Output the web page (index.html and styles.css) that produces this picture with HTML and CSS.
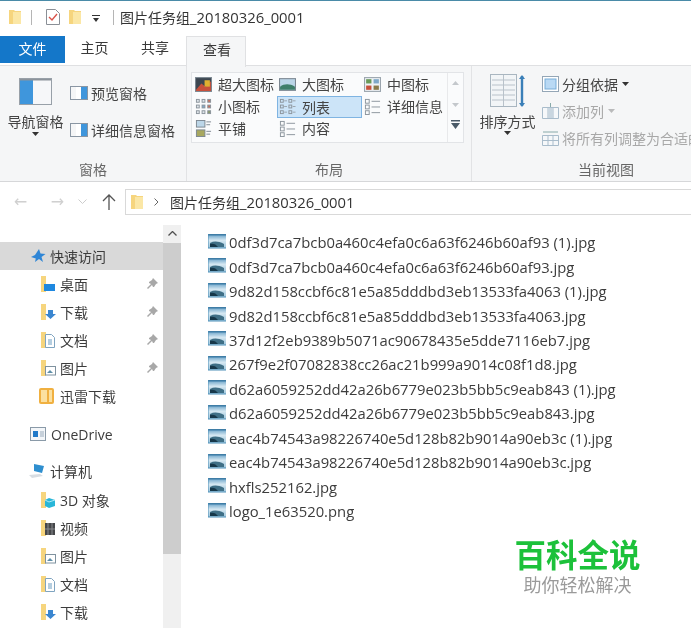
FILE: index.html
```html
<!DOCTYPE html>
<html lang="zh">
<head>
<meta charset="utf-8">
<title>图片任务组_20180326_0001</title>
<link rel="stylesheet" href="styles.css">
</head>
<body>
<svg class="defs" width="0" height="0">
  <defs>
    <linearGradient id="sky" x1="0" y1="0" x2="0" y2="1"><stop offset="0" stop-color="#5f9cc4"/><stop offset=".45" stop-color="#d6e8f2"/><stop offset="1" stop-color="#9cc4da"/></linearGradient>
  </defs>
  <symbol id="folder" viewBox="0 0 12 16"><path d="M0 1h5l1 1h6v13H0z" fill="#f6d57e"/><path d="M4 3h8v12H4z" fill="#fbe7a6"/></symbol>
  <symbol id="img" viewBox="0 0 18 16"><path d="M0 1h17l1 1v13H0z" fill="url(#sky)"/><path d="M0 1h18v1.500H0z" fill="#3f7da6"/><path d="M2 10c4-2 8-2 14 1v3H2z" fill="#3f6f86"/><path d="M2 11c3-1 6 0 8 3H2z" fill="#17384a"/><path d="M0 1v14h18" fill="none" stroke="#4f90b8"/></symbol>
  <symbol id="pin" viewBox="0 0 12 12"><path d="M7 0l5 5-2 1-2 3-1 0-1-2-4 4-1-1 4-4-2-1 0-1 3-2z" fill="#a8a8a8"/></symbol>
  <symbol id="pane" viewBox="0 0 18 14"><rect x="0.5" y="0.5" width="17" height="13" fill="#fff" stroke="#8a96a3"/><rect x="1" y="1" width="5" height="12" fill="#f5f6f7"/><rect x="11" y="1" width="6" height="12" fill="#3f96dc"/></symbol>
  <symbol id="grid" viewBox="0 0 18 18"><g fill="#dfe5ea" stroke="#8b949c"><rect x="1.500" y="1.500" width="3" height="3"/><rect x="7.500" y="1.500" width="3" height="3"/><rect x="13.500" y="1.500" width="3" height="3" fill="#c8705c"/><rect x="1.500" y="7.500" width="3" height="3"/><rect x="7.500" y="7.500" width="3" height="3" fill="#7fa8c8"/><rect x="13.500" y="7.500" width="3" height="3" fill="#c8705c"/><rect x="1.500" y="13.500" width="3" height="3"/><rect x="7.500" y="13.500" width="3" height="3"/><rect x="13.500" y="13.500" width="3" height="3" fill="#8a9a6a"/></g></symbol>
  <symbol id="list2" viewBox="0 0 18 18"><g fill="none" stroke="#8b949c"><rect x="1.500" y="1.500" width="3" height="3"/><rect x="10.500" y="1.500" width="3" height="3"/><rect x="1.500" y="7.500" width="3" height="3"/><rect x="10.500" y="7.500" width="3" height="3"/><rect x="1.500" y="13.500" width="3" height="3"/><rect x="10.500" y="13.500" width="3" height="3"/></g><path d="M5.500 3h3M5.500 9h3M5.500 15h3M14.500 3h3M14.500 9h3M14.500 15h3" stroke="#9aa3ab"/></symbol>
  <symbol id="list" viewBox="0 0 18 18"><g fill="none" stroke="#8b949c"><rect x="1.500" y="1.500" width="4" height="4"/><rect x="1.500" y="7.500" width="4" height="4"/><rect x="1.500" y="13.500" width="4" height="4"/></g><path d="M8 3.500h9M8 9.500h9M8 15.500h9" stroke="#8b949c"/></symbol>
  <symbol id="chev" viewBox="0 0 7 4"><path d="M0 0h7L3.500 4z" fill="#333"/></symbol>
</svg>

<div class="window">
  <header class="titlebar">
    <svg class="ic-folder"><use href="#folder"/></svg>
    <span class="vsep"></span>
    <svg class="ic-check" viewBox="0 0 14 16"><path d="M.5.500h9l4 4v11H.5z" fill="#fff" stroke="#8a8f96"/><path d="M3 8l3 3 5-6" fill="none" stroke="#d9534a" stroke-width="1.400"/></svg>
    <svg class="ic-folder"><use href="#folder"/></svg>
    <svg class="ic-drop" viewBox="0 0 8 7"><path d="M0 0h8v1H0zM1 3h6L4 7z" fill="#333"/></svg>
    <span class="vsep"></span>
    <span class="title-text">图片任务组<span class="latin">_20180326_0001</span></span>
  </header>

  <nav class="tabs">
    <span class="tab tab-file">文件</span>
    <span class="tab tab-home">主页</span>
    <span class="tab tab-share">共享</span>
    <span class="tab tab-view">查看</span>
  </nav>

  <section class="ribbon">
    <div class="group group-pane">
      <div class="group-body pane-body">
        <div class="big-btn big-nav">
          <svg class="ic-navpane" viewBox="0 0 33 27"><rect x=".5" y=".5" width="32" height="26" fill="#f6f7f9" stroke="#98a0a8"/><rect x="1" y="2" width="13" height="24" fill="#3f96dc"/><rect x="1" y="1" width="31" height="1.500" fill="#8c939b"/></svg>
          <span class="big-label">导航窗格</span>
          <svg class="caret"><use href="#chev"/></svg>
        </div>
        <div class="small-col">
          <div class="small-btn"><svg class="ic-pane"><use href="#pane"/></svg>预览窗格</div>
          <div class="small-btn"><svg class="ic-pane"><use href="#pane"/></svg>详细信息窗格</div>
        </div>
      </div>
      <div class="group-label">窗格</div>
    </div>

    <div class="group group-layout">
      <div class="group-body">
        <div class="gallery">
          <div class="gallery-grid">
            <div class="g-item"><svg class="g-ic" viewBox="0 0 16 14"><rect x=".5" y=".5" width="15" height="13" fill="#3c4650" stroke="#7c8791"/><path d="M1 12l5-6 4 3 5-5v9H1z" fill="#c8503c"/><rect x="9" y="3" width="5" height="6" fill="#e0b030"/></svg>超大图标</div>
            <div class="g-item"><svg class="g-ic" viewBox="0 0 16 14"><rect x=".5" y="1.500" width="15" height="11" fill="#bcd6e8" stroke="#7c8791"/><path d="M1 9c4-3 9-3 14 0v3H1z" fill="#3f7f6a"/></svg>大图标</div>
            <div class="g-item"><svg class="g-ic" viewBox="0 0 16 14"><rect x=".5" y=".5" width="15" height="13" fill="#eef2f5" stroke="#9aa4ad"/><rect x="2" y="2" width="5" height="4" fill="#6a9a5a"/><rect x="9" y="2" width="5" height="4" fill="#7fa8c8"/><rect x="2" y="8" width="5" height="4" fill="#c8503c"/><rect x="9" y="8" width="5" height="4" fill="#8a7a4a"/></svg>中图标</div>
            <div class="g-item"><svg class="g-ic"><use href="#grid"/></svg>小图标</div>
            <div class="g-item g-active"><svg class="g-ic"><use href="#list2"/></svg>列表</div>
            <div class="g-item"><svg class="g-ic"><use href="#list"/></svg>详细信息</div>
            <div class="g-item"><svg class="g-ic" viewBox="0 0 16 18"><rect x=".5" y=".5" width="9" height="7" fill="#bcd6e8" stroke="#7c8791"/><rect x=".5" y="10.500" width="9" height="7" fill="#a8a860" stroke="#7c8791"/><path d="M11 2h5M11 5h4M11 12h5M11 15h4" stroke="#7c8791"/></svg>平铺</div>
            <div class="g-item"><svg class="g-ic"><use href="#list"/></svg>内容</div>
          </div>
          <div class="gallery-scroll">
            <svg class="gs gs-up" viewBox="0 0 7 4"><path d="M0 4h7L3.500 0z" fill="#c4c8cc"/></svg>
            <svg class="gs gs-down" viewBox="0 0 7 4"><path d="M0 0h7L3.500 4z" fill="#c4c8cc"/></svg>
            <svg class="gs gs-more" viewBox="0 0 9 9"><path d="M0 0h9v1.500H0zM0 3h9L4.500 9z" fill="#4a5a68"/></svg>
          </div>
        </div>
      </div>
      <div class="group-label">布局</div>
    </div>

    <div class="group group-view">
      <div class="group-body view-body">
        <div class="big-btn big-sort">
          <svg class="ic-sort" viewBox="0 0 36 34"><rect x=".5" y=".5" width="26" height="32" fill="#f2f5f7" stroke="#a9b6c0"/><path d="M2 6h23M2 11h23M2 16h23M2 21h23M2 26h23M13.500 1v31" stroke="#b9c2ca"/><path d="M32 2v30" stroke="#3a7fb8" stroke-width="2.400"/><path d="M29 5l3-4 3 4zM29 29l3 4 3-4z" fill="#3a7fb8"/></svg>
          <span class="big-label">排序方式</span>
          <svg class="caret"><use href="#chev"/></svg>
        </div>
        <div class="small-col view-col">
          <div class="small-btn"><svg class="ic-view" viewBox="0 0 17 16"><rect x=".5" y=".5" width="16" height="15" fill="#fff" stroke="#94a6b6"/><rect x="3" y="3" width="11" height="10" fill="#b9d9f4" stroke="#79add8"/></svg>分组依据<svg class="caret-inline"><use href="#chev"/></svg></div>
          <div class="small-btn is-muted"><svg class="ic-view" viewBox="0 0 17 16"><path d="M.5 4.500h16v11H.5zM6 4.500v11M11 4.500v11" fill="#f6f8fa" stroke="#a9bccb"/><rect x="6" y="5" width="5" height="10" fill="#c9d6e0"/><path d="M8.500 0v4" stroke="#8aa"/></svg>添加列<svg class="caret-inline faint"><use href="#chev"/></svg></div>
          <div class="small-btn is-muted"><svg class="ic-view" viewBox="0 0 17 16"><path d="M.5 5.500h16v10H.5zM.5 10.500h16M6 5.500v10M11 5.500v10" fill="#f6f8fa" stroke="#a9bccb"/><path d="M1 2h15" stroke="#8aa"/></svg>将所有列调整为合适的宽度</div>
        </div>
      </div>
      <div class="group-label">当前视图</div>
    </div>
  </section>

  <div class="addressbar">
    <span class="nav-arrow arrow-back">←</span>
    <span class="nav-arrow arrow-fwd">→</span>
    <svg class="arrow-down" viewBox="0 0 9 5"><path d="M.5.500l4 4 4-4" fill="none" stroke="#ccc"/></svg>
    <svg class="arrow-up" viewBox="0 0 14 16"><path d="M7 16V1M1 7l6-6 6 6" fill="none" stroke="#555" stroke-width="1.300"/></svg>
    <div class="address">
      <svg class="addr-folder"><use href="#folder"/></svg>
      <svg class="addr-chev" viewBox="0 0 5 8"><path d="M.5.500l3.500 3.500-3.500 3.500" fill="none" stroke="#666"/></svg>
      <span>图片任务组<span class="latin">_20180326_0001</span></span>
    </div>
  </div>

  <main class="content">
    <aside class="navpane">
      <div class="nav-row level-0 is-selected"><svg class="nav-ic" viewBox="0 0 16 16"><path d="M9 1l1.500 4.500 5 .5-4 3 1.500 5L9 11l-4 3 .8-3.500L1 9l4-2z" fill="#2f86d6"/></svg>快速访问</div>
      <div class="nav-row level-1"><svg class="nav-ic" viewBox="0 0 16 16"><path d="M1 0h5v16H1z" fill="#f6d57e"/><path d="M4 8h11v7H4z" fill="#1e88e0"/></svg>桌面<svg class="pin"><use href="#pin"/></svg></div>
      <div class="nav-row level-1"><svg class="nav-ic" viewBox="0 0 16 16"><path d="M1 0h5v16H1z" fill="#f6d57e"/><path d="M8 6h5v4h3l-5.500 5L5 10h3z" fill="#3a86d0"/></svg>下载<svg class="pin"><use href="#pin"/></svg></div>
      <div class="nav-row level-1"><svg class="nav-ic" viewBox="0 0 16 16"><path d="M1 0h5v16H1z" fill="#f6d57e"/><path d="M5.500 2.500h6l3 3v10h-9z" fill="#fff" stroke="#7fa4c0"/><path d="M8 8h4M8 10h4M8 12h4" stroke="#6a9cc0"/></svg>文档<svg class="pin"><use href="#pin"/></svg></div>
      <div class="nav-row level-1"><svg class="nav-ic" viewBox="0 0 16 16"><path d="M1 0h5v16H1z" fill="#f6d57e"/><rect x="5.500" y="6.500" width="10" height="8.500" fill="#fff" stroke="#7f929f"/><path d="M7 13l3-3 3 3z" fill="#5f8fa8"/></svg>图片<svg class="pin"><use href="#pin"/></svg></div>
      <div class="nav-row level-1"><svg class="nav-ic nav-ic-xl" viewBox="0 0 18 18"><rect x="1" y="1" width="15" height="16" rx="2" fill="#f0b040"/><rect x="3" y="3" width="6" height="12" fill="#fbe0a0"/><rect x="11" y="3" width="3" height="12" fill="#fbe0a0"/></svg>迅雷下载</div>
      <div class="nav-row level-0 gap-onedrive"><svg class="nav-ic" viewBox="0 0 16 14"><rect x=".5" y=".5" width="15" height="13" fill="#f3f6f9" stroke="#8a9aa8"/><rect x="3" y="4" width="5" height="6" fill="#1f78c8"/><path d="M10 5h4M10 7h4M10 9h4" stroke="#9ab"/></svg>OneDrive</div>
      <div class="nav-row level-0 gap-pc"><svg class="nav-ic nav-ic-pc" viewBox="0 0 18 16"><path d="M6 1l10 2-2 7-8-2z" fill="#2f8fcf"/><path d="M1 12l11-1 3 2-11 2z" fill="#d8dde2"/></svg>计算机</div>
      <div class="nav-row level-1 gap-sub"><svg class="nav-ic" viewBox="0 0 16 16"><path d="M1 0h5v16H1z" fill="#f6d57e"/><path d="M9 6l6 2v6l-6 2-4-2V8z" fill="#29b6d8"/><path d="M5 8l4 2 6-2" fill="none" stroke="#a8e8f4"/></svg>3D 对象</div>
      <div class="nav-row level-1"><svg class="nav-ic" viewBox="0 0 16 16"><path d="M1 0h5v16H1z" fill="#f6d57e"/><rect x="5" y="3" width="10" height="12" fill="#45474a"/><path d="M8 3v12M12 3v12M5 9h10" stroke="#8a8c8f"/></svg>视频</div>
      <div class="nav-row level-1"><svg class="nav-ic" viewBox="0 0 16 16"><path d="M1 0h5v16H1z" fill="#f6d57e"/><rect x="5.500" y="6.500" width="10" height="8.500" fill="#fff" stroke="#7f929f"/><path d="M7 13l3-3 3 3z" fill="#5f8fa8"/></svg>图片</div>
      <div class="nav-row level-1"><svg class="nav-ic" viewBox="0 0 16 16"><path d="M1 0h5v16H1z" fill="#f6d57e"/><path d="M5.500 2.500h6l3 3v10h-9z" fill="#fff" stroke="#7fa4c0"/><path d="M8 8h4M8 10h4M8 12h4" stroke="#6a9cc0"/></svg>文档</div>
      <div class="nav-row level-1"><svg class="nav-ic" viewBox="0 0 16 16"><path d="M1 0h5v16H1z" fill="#f6d57e"/><path d="M8 6h5v4h3l-5.500 5L5 10h3z" fill="#3a86d0"/></svg>下载</div>
    </aside>
    <div class="scrollbar">
      <svg class="sb-up" viewBox="0 0 9 5"><path d="M.5 4.500l4-4 4 4" fill="none" stroke="#505050" stroke-width="1.300"/></svg>
      <div class="sb-thumb"></div>
    </div>
    <ul class="files">
      <li><svg class="file-ic"><use href="#img"/></svg>0df3d7ca7bcb0a460c4efa0c6a63f6246b60af93 (1).jpg</li>
      <li><svg class="file-ic"><use href="#img"/></svg>0df3d7ca7bcb0a460c4efa0c6a63f6246b60af93.jpg</li>
      <li><svg class="file-ic"><use href="#img"/></svg>9d82d158ccbf6c81e5a85dddbd3eb13533fa4063 (1).jpg</li>
      <li><svg class="file-ic"><use href="#img"/></svg>9d82d158ccbf6c81e5a85dddbd3eb13533fa4063.jpg</li>
      <li><svg class="file-ic"><use href="#img"/></svg>37d12f2eb9389b5071ac90678435e5dde7116eb7.jpg</li>
      <li><svg class="file-ic"><use href="#img"/></svg>267f9e2f07082838cc26ac21b999a9014c08f1d8.jpg</li>
      <li><svg class="file-ic"><use href="#img"/></svg>d62a6059252dd42a26b6779e023b5bb5c9eab843 (1).jpg</li>
      <li><svg class="file-ic"><use href="#img"/></svg>d62a6059252dd42a26b6779e023b5bb5c9eab843.jpg</li>
      <li><svg class="file-ic"><use href="#img"/></svg>eac4b74543a98226740e5d128b82b9014a90eb3c (1).jpg</li>
      <li><svg class="file-ic"><use href="#img"/></svg>eac4b74543a98226740e5d128b82b9014a90eb3c.jpg</li>
      <li><svg class="file-ic"><use href="#img"/></svg>hxfls252162.jpg</li>
      <li><svg class="file-ic"><use href="#img"/></svg>logo_1e63520.png</li>
    </ul>
  </main>

  <div class="watermark">
    <div class="wm-title">百科全说</div>
    <div class="wm-sub">助你轻松解决</div>
  </div>
</div>
</body>
</html>
```

FILE: styles.css
```css
* { box-sizing: border-box; }
html, body { margin: 0; padding: 0; background: #fff; }
body { width: 691px; height: 628px; overflow: hidden; font-family: "Noto Sans CJK SC", "Noto Sans", sans-serif; font-size: 14px; color: #3a3a3a; }
.defs { position: absolute; }
svg { display: block; flex: none; }

.window { position: relative; width: 691px; height: 628px; overflow: hidden; filter: blur(.3px); }
.latin { font-size: 14.8px; }

/* title */
.titlebar { height: 35px; border-top: 1px solid #4a8ba8; background: #fff; display: flex; align-items: center; padding: 0 0 2px 9px; }
.ic-folder { width: 12px; height: 16px; }
.vsep { width: 1px; height: 15px; background: #b5b5b5; }
.titlebar .vsep:nth-of-type(1) { margin: 0 14px 0 10px; }
.ic-check { width: 14px; height: 16px; margin-right: 9px; }
.ic-drop { width: 8px; height: 7px; margin: 2px 13px 0 11px; }
.title-text { margin-left: 6px; color: #333; line-height: 20px; font-family: "Open Sans", "Noto Sans CJK SC", sans-serif; }

/* tabs */
.tabs { height: 30px; display: flex; align-items: flex-start; position: relative; z-index: 1; }
.tab { height: 27px; line-height: 25px; text-align: center; }
.tab-file { width: 65px; background: #1477c9; color: #fff; margin-top: 1px; }
.tab-home { width: 59px; }
.tab-share { width: 62px; }
.tab-view { width: 60px; height: 31px; margin-top: 1px; background: #f5f6f7; border: 1px solid #e0e1e3; border-bottom: 0; padding-left: 2px; }

/* ribbon */
.ribbon { height: 117px; background: #f5f6f7; border-top: 1px solid #dfe0e2; border-bottom: 1px solid #d6d7d9; display: flex; overflow: hidden; }
.group { flex: none; display: flex; flex-direction: column; border-right: 1px solid #e2e3e5; }
.group-pane { width: 187px; }
.group-layout { width: 285px; }
.group-view { width: 268px; border-right: 0; }
.group-body { height: 92px; display: flex; }
.group-label { height: 22px; line-height: 22px; text-align: center; color: #666; font-size: 14px; }
.pane-body { padding: 12px 0 0 7px; }
.big-btn { display: flex; flex-direction: column; align-items: center; width: 57px; flex: none; }
.big-nav { width: 57px; }
.ic-navpane { width: 33px; height: 27px; }
.big-label { line-height: 20px; margin-top: 6px; color: #444; white-space: nowrap; }
.caret { width: 7px; height: 4px; margin-top: 1px; }
.small-col { display: flex; flex-direction: column; margin-left: 6px; padding-top: 5px; gap: 17px; }
.small-btn { display: flex; align-items: center; height: 20px; line-height: 20px; white-space: nowrap; gap: 3px; color: #444; }
.ic-pane { width: 18px; height: 14px; }

/* gallery */
.group-layout .group-body { padding: 6px 0 0 4px; }
.gallery { width: 273px; height: 71px; background: #fafbfc; border: 1px solid #e2e4e7; display: flex; }
.gallery-grid { flex: 1; display: grid; grid-template-columns: 84px 85px 85px; grid-template-rows: repeat(3, 22px); padding: 1px 0 0 1px; }
.g-item { display: flex; align-items: center; gap: 6px; padding: 0 0 2px 2px; line-height: 18px; white-space: nowrap; color: #444; }
.g-ic { width: 17px; height: 17px; }
.g-active { background: #cce4f8; border: 1px solid #7fb4e2; padding: 0 0 1px 1px; }
.gallery-scroll { width: 16px; border-left: 1px solid #e8e9eb; display: flex; flex-direction: column; align-items: center; padding-top: 8px; }
.gs { width: 7px; height: 4px; }
.gs-down { margin-top: 18px; }
.gs-more { width: 9px; height: 9px; margin-top: 13px; }

/* view */
.view-body { padding: 8px 0 0 7px; }
.big-sort { width: 57px; }
.ic-sort { width: 36px; height: 34px; }
.big-sort .big-label { margin-top: 3px; }
.big-sort .caret { margin-top: 0; }
.view-col { margin-left: 6px; padding-top: 0; gap: 7px; min-width: 0; }
.view-col .small-btn { gap: 3px; height: 20px; }
.ic-view { width: 17px; height: 16px; }
.is-muted { color: #a8a8a8; }
.caret-inline { width: 7px; height: 4px; margin-left: 1px; }
.faint { opacity: .3; }

/* address */
.addressbar { height: 43px; display: flex; align-items: center; padding-bottom: 4px; background: #fff; }
.nav-arrow { color: #d0d0d0; font-size: 16px; line-height: 20px; font-family: "DejaVu Sans", sans-serif; text-align: center; }
.arrow-back { width: 17px; margin-left: 12px; }
.arrow-fwd { width: 17px; margin-left: 20px; }
.arrow-down { width: 9px; height: 5px; margin-left: 12px; }
.arrow-up { width: 14px; height: 16px; margin-left: 15px; }
.address { margin-left: 9px; flex: 1; height: 26px; border: 1px solid #d9d9d9; border-right: 0; display: flex; align-items: center; padding-left: 5px; color: #333; font-family: "Open Sans", "Noto Sans CJK SC", sans-serif; }
.addr-folder { width: 12px; height: 16px; }
.addr-chev { width: 5px; height: 8px; margin: 0 11px 0 11px; }

/* content */
.content { height: 403px; display: flex; }
.navpane { width: 163px; flex: none; padding-top: 17px; font-family: "Open Sans", "Noto Sans CJK SC", sans-serif; }
.nav-row { height: 28px; display: flex; align-items: center; white-space: nowrap; color: #3c3c3c; gap: 5px; position: relative; }
.level-0 { padding-left: 30px; }
.level-1 { padding-left: 40px; gap: 4px; }
.is-selected { background: #d9d9d9; gap: 4px; }
.gap-onedrive { margin-top: 10px; }
.gap-pc { margin-top: 9px; gap: 4px; }
.gap-sub { margin-top: 1px; }
.nav-ic { width: 16px; height: 16px; }
.nav-ic-xl { width: 18px; height: 18px; margin-left: -2px; }
.nav-ic-pc { width: 18px; height: 16px; margin-left: -2px; }
.pin { position: absolute; right: 5px; top: 8px; width: 12px; height: 12px; }
.scrollbar { width: 18px; flex: none; background: #f0f0f0; display: flex; flex-direction: column; }
.sb-up { width: 9px; height: 5px; margin: 6px 0 7px 5px; }
.sb-thumb { height: 311px; background: #cdcdcd; }

.files { list-style: none; margin: 0; padding: 5px 0 0 27px; flex: 1; font-family: "Open Sans", "Noto Sans", sans-serif; font-size: 14.8px; color: #3c3c3c; }
.files li { height: 24.45px; display: flex; align-items: center; gap: 3px; white-space: nowrap; }
.file-ic { width: 18px; height: 16px; margin-top: -3px; }

/* watermark */
.watermark { position: absolute; left: 510px; top: 534px; width: 135px; height: 64px; background: #fff; display: flex; flex-direction: column; align-items: center; }
.wm-title { color: #1cc13a; font-size: 31.5px; font-weight: 700; line-height: 38px; white-space: nowrap; }
.wm-sub { color: #9a9a9a; font-size: 18px; line-height: 24px; white-space: nowrap; }
```
